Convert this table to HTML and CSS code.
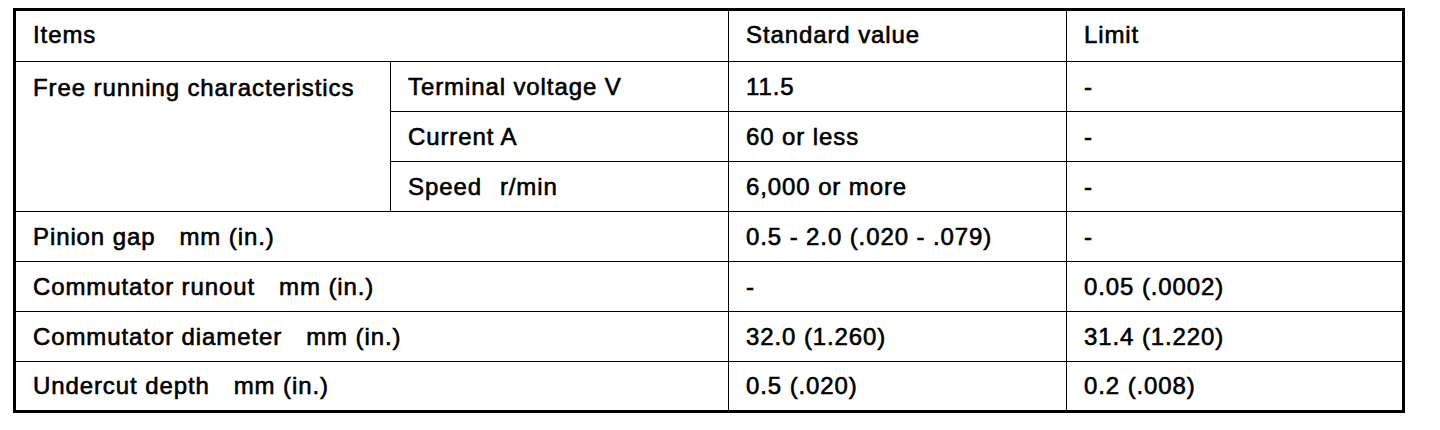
FILE: index.html
```html
<!DOCTYPE html>
<html lang="en">
<head>
<meta charset="utf-8">
<title>Starter motor specifications</title>
<link rel="stylesheet" href="styles.css">
</head>
<body>
<div class="spec">
  <div class="cell span2 head">Items</div>
  <div class="cell head">Standard value</div>
  <div class="cell head">Limit</div>

  <div class="cell rows3">Free running characteristics</div>
  <div class="cell">Terminal voltage V</div>
  <div class="cell">11.5</div>
  <div class="cell">-</div>

  <div class="cell">Current A</div>
  <div class="cell">60 or less</div>
  <div class="cell">-</div>

  <div class="cell">Speed<span class="unit short">r/min</span></div>
  <div class="cell">6,000 or more</div>
  <div class="cell">-</div>

  <div class="cell span2">Pinion gap<span class="unit">mm (in.)</span></div>
  <div class="cell">0.5 - 2.0 (.020 - .079)</div>
  <div class="cell">-</div>

  <div class="cell span2">Commutator runout<span class="unit">mm (in.)</span></div>
  <div class="cell">-</div>
  <div class="cell">0.05 (.0002)</div>

  <div class="cell span2">Commutator diameter<span class="unit">mm (in.)</span></div>
  <div class="cell">32.0 (1.260)</div>
  <div class="cell">31.4 (1.220)</div>

  <div class="cell span2">Undercut depth<span class="unit">mm (in.)</span></div>
  <div class="cell">0.5 (.020)</div>
  <div class="cell">0.2 (.008)</div>
</div>
</body>
</html>
```

FILE: styles.css
```css
html, body {
  margin: 0;
  padding: 0;
  background: #ffffff;
}

body {
  padding: 8px 0 0 13px;
}

.spec {
  display: grid;
  grid-template-columns: 374px 337px 337px 335px;
  grid-template-rows: 50px 49px 49px 49px 49px 49px 49px 48px;
  gap: 1px;
  width: 1386px;
  background: #000000;
  border: 3px solid #000000;
  font-family: "Liberation Sans", Arial, Helvetica, sans-serif;
  font-size: 24px;
  letter-spacing: 0.9px;
  color: #000000;
  -webkit-text-stroke: 0.6px #000000;
}

.cell {
  background: #ffffff;
  display: flex;
  align-items: center;
  padding-left: 17px;
  white-space: nowrap;
}

.head {
  padding-bottom: 3px;
}

.span2 {
  grid-column: span 2;
}

.rows3 {
  grid-row: span 3;
  align-items: flex-start;
  padding-top: 12px;
}

.unit {
  margin-left: 24px;
}

.unit.short {
  margin-left: 18px;
}
```
